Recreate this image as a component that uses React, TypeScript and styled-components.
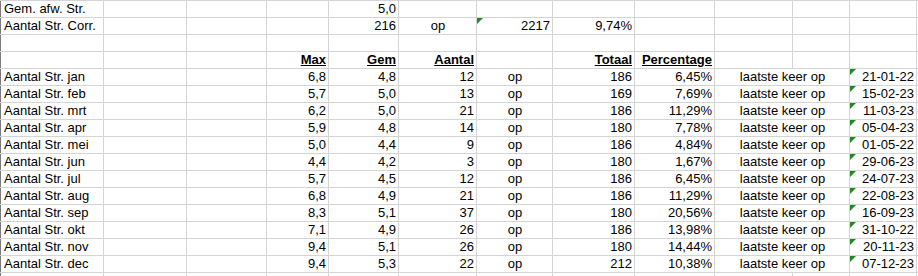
import React from "react";
import styled, { createGlobalStyle } from "styled-components";

type Align = "left" | "right" | "center";

const months = [
  ["jan", "6,8", "4,8", "12", "186", "6,45%", "21-01-22"],
  ["feb", "5,7", "5,0", "13", "169", "7,69%", "15-02-23"],
  ["mrt", "6,2", "5,0", "21", "186", "11,29%", "11-03-23"],
  ["apr", "5,9", "4,8", "14", "180", "7,78%", "05-04-23"],
  ["mei", "5,0", "4,4", "9", "186", "4,84%", "01-05-22"],
  ["jun", "4,4", "4,2", "3", "180", "1,67%", "29-06-23"],
  ["jul", "5,7", "4,5", "12", "186", "6,45%", "24-07-23"],
  ["aug", "6,8", "4,9", "21", "186", "11,29%", "22-08-23"],
  ["sep", "8,3", "5,1", "37", "180", "20,56%", "16-09-23"],
  ["okt", "7,1", "4,9", "26", "186", "13,98%", "31-10-22"],
  ["nov", "9,4", "5,1", "26", "180", "14,44%", "20-11-23"],
  ["dec", "9,4", "5,3", "22", "212", "10,38%", "07-12-23"],
];

// column widths measured between the grid lines
const colWidths = [103, 83, 80, 62, 70, 78, 76, 82, 80, 78, 57, 67, 60];

const App = () => {
  return (
    <>
      <GlobalStyle />
      <Viewport>
        <Sheet>
          <colgroup>
            {colWidths.map((w, i) => (
              <col key={i} style={{ width: w }} />
            ))}
          </colgroup>
          <tbody>
            <tr>
              <Label>Gem. afw. Str.</Label>
              <Cell />
              <Cell />
              <Cell />
              <Cell $align="right">5,0</Cell>
              <Cell />
              <Cell />
              <Cell />
              <Cell />
              <Cell />
              <Cell />
              <Cell />
              <Cell />
            </tr>
            <tr>
              <Label>Aantal Str. Corr.</Label>
              <Cell />
              <Cell />
              <Cell />
              <Cell $align="right">216</Cell>
              <Cell $align="center">op</Cell>
              <Cell $align="right" $flag>
                2217
              </Cell>
              <Cell $align="right">9,74%</Cell>
              <Cell />
              <Cell />
              <Cell />
              <Cell />
              <Cell />
            </tr>
            <tr>
              <Label />
              {colWidths.slice(1).map((_, i) => (
                <Cell key={i} />
              ))}
            </tr>
            <tr>
              <Label />
              <Cell />
              <Cell />
              <HeadCell $align="right">Max</HeadCell>
              <HeadCell $align="right">Gem</HeadCell>
              <HeadCell $align="right">Aantal</HeadCell>
              <Cell />
              <HeadCell $align="right">Totaal</HeadCell>
              <HeadCell $align="right">Percentage</HeadCell>
              <Cell />
              <Cell />
              <Cell />
              <Cell />
            </tr>
            {months.map(([m, max, gem, aantal, totaal, pct, date]) => (
              <tr key={m}>
                <Label>Aantal Str. {m}</Label>
                <Cell />
                <Cell />
                <Cell $align="right">{max}</Cell>
                <Cell $align="right">{gem}</Cell>
                <Cell $align="right">{aantal}</Cell>
                <Cell $align="center">op</Cell>
                <Cell $align="right">{totaal}</Cell>
                <Cell $align="right">{pct}</Cell>
                <Cell $align="center" colSpan={2}>
                  laatste keer op
                </Cell>
                <Cell $align="right" $flag>
                  {date}
                </Cell>
                <Cell />
              </tr>
            ))}
            <tr>
              <Label />
              {colWidths.slice(1).map((_, i) => (
                <Cell key={i} />
              ))}
            </tr>
          </tbody>
        </Sheet>
      </Viewport>
    </>
  );
};

export default App;

const GlobalStyle = createGlobalStyle`
  html, body {
    margin: 0;
    padding: 0;
    background: #ffffff;
    overflow: hidden;
  }
`;

const Viewport = styled.div`
  width: 918px;
  height: 276px;
  overflow: hidden;
  background: #ffffff;
`;

const Sheet = styled.table`
  border-collapse: collapse;
  table-layout: fixed;
  width: ${colWidths.reduce((a, b) => a + b, 0)}px;
  font-family: "Liberation Sans", Arial, sans-serif;
  font-size: 13px;
  color: #000000;
`;

const Cell = styled.td<{ $align?: Align; $flag?: boolean }>`
  position: relative;
  height: 16px;
  padding: 0 2px 0 3px;
  line-height: 16px;
  border: 1px solid #d4d4d4;
  text-align: ${(p) => p.$align || "left"};
  vertical-align: bottom;
  white-space: nowrap;
  overflow: hidden;

  &::before {
    content: "";
    display: ${(p) => (p.$flag ? "block" : "none")};
    position: absolute;
    top: 0;
    left: 0;
    width: 0;
    height: 0;
    border-top: 6px solid #1f8a1f;
    border-right: 6px solid transparent;
  }
`;

const Label = styled(Cell)`
  border-left: 1px solid #7a7a7a;
  overflow: visible;
`;

const HeadCell = styled(Cell)`
  font-weight: bold;
  text-decoration: underline;
`;
